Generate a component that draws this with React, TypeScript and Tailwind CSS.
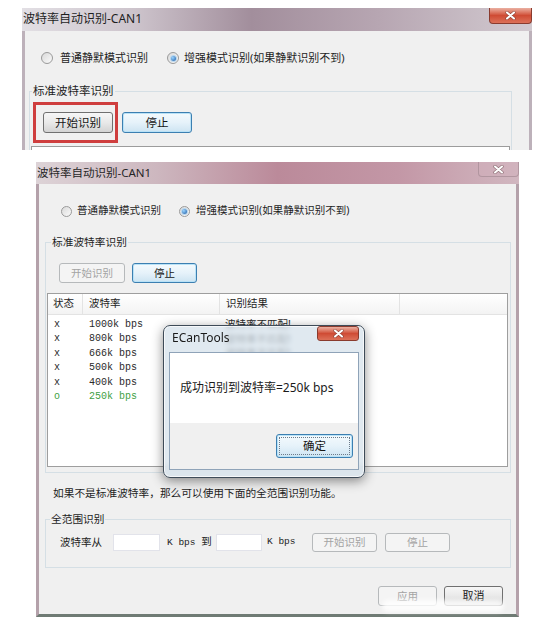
import React from "react";
import { twMerge } from "tailwind-merge";

const ui = "font-['Noto_Sans','Noto_Sans_CJK_SC',sans-serif]";
const mono = "font-['Liberation_Mono','Noto_Sans_CJK_SC',monospace]";

type BtnVariant = "normal" | "focus" | "disabled";

function WinButton({
    children,
    variant = "normal",
    className,
}: {
    children: React.ReactNode;
    variant?: BtnVariant;
    className?: string;
}) {
    const styles: Record<BtnVariant, string> = {
        normal: "border-[#707070] bg-linear-to-b from-[#f7f7f7] via-[#e9e9e9] to-[#d3d3d3] text-[#151515]",
        focus: "border-[#3c7fb1] bg-linear-to-b from-[#f4fafd] via-[#e6f2fa] to-[#cde4f2] text-[#151515] shadow-[inset_0_0_0_1px_#b9e2f7]",
        disabled: "border-[#b6b9bb] bg-[#f4f4f4] text-[#a3a3a3]",
    };
    return (
        <div
            className={twMerge(
                "flex shrink-0 items-center justify-center rounded-[3px] border leading-none",
                styles[variant],
                className,
            )}
        >
            {children}
        </div>
    );
}

function Radio({ checked, className }: { checked?: boolean; className?: string }) {
    return (
        <span
            className={twMerge(
                "flex shrink-0 items-center justify-center rounded-full border border-[#9a9a9a] bg-linear-to-br from-[#d9d9d9] to-[#fbfbfb]",
                className,
            )}
        >
            {checked && (
                <span className="h-[5px] w-[5px] rounded-full bg-[radial-gradient(circle_at_35%_35%,#9ad4ff,#1a5aa5)] shadow-[0_0_0_1px_#b8d6ee]" />
            )}
        </span>
    );
}

function CloseButton({ active, className }: { active?: boolean; className?: string }) {
    return (
        <span
            className={twMerge(
                "flex shrink-0 items-center justify-center rounded-b-[4px] border border-t-0",
                active
                    ? "border-[#8a3b2e] bg-linear-to-b from-[#eab0a2] via-[#cf4b34] to-[#dc7058]"
                    : "border-[#a48b95]/70 bg-[#d3b0bb]/40",
                className,
            )}
        >
            <svg width="11" height="9" viewBox="0 0 11 9">
                <path d="M2 1.5 L9 7.5 M9 1.5 L2 7.5" stroke="#4a2a2a" strokeOpacity="0.45" strokeWidth="3.4" strokeLinecap="round" />
                <path d="M2 1.5 L9 7.5 M9 1.5 L2 7.5" stroke="#ffffff" strokeWidth="2" strokeLinecap="round" />
            </svg>
        </span>
    );
}

function GroupHeader({ label, lead, textClass }: { label: string; lead: string; textClass: string }) {
    return (
        <div className="flex h-[14px] items-end">
            <div className={twMerge("h-[7px] border-l border-t border-[#d5dfe5]", lead)} />
            <span className={twMerge("self-center px-[1px] leading-[14px]", textClass)}>{label}</span>
            <div className="h-[7px] flex-1 border-r border-t border-[#d5dfe5]" />
        </div>
    );
}

// rows 4-5 have their result hidden behind the message box
const rows = [
    { s: "x", rate: "1000k bps", res: "波特率不匹配!" },
    { s: "x", rate: "800k bps", res: "波特率不匹配!" },
    { s: "x", rate: "666k bps", res: "波特率不匹配!" },
    { s: "x", rate: "500k bps", res: "" },
    { s: "x", rate: "400k bps", res: "" },
    { s: "o", rate: "250k bps", res: "", ok: true },
];

function FirstWindow() {
    return (
        <div className="ml-[22px] mt-[8px] flex h-[142px] w-[510px] shrink-0 flex-col overflow-hidden">
            <div className="flex h-[23px] shrink-0 items-start bg-[linear-gradient(90deg,#e2dfe4_0%,#cdc4cc_22%,#a28e9c_45%,#b7a6b2_70%,#d2cad0_100%)]">
                <span className="mt-[3px] pl-[1px] text-[12px] leading-[16px] text-[#1e1e1e]">波特率自动识别-CAN1</span>
                <CloseButton active className="ml-auto h-[16px] w-[43px]" />
            </div>
            <div className="flex-1 border-x-[3px] border-[#bdb1ba] bg-[#f0f0f0]">
                <div className="mt-[20px] flex h-[14px] items-center pl-[16px] text-[11px] text-[#1e1e1e]">
                    <Radio className="h-[12px] w-[12px]" />
                    <span className="ml-[7px]">普通静默模式识别</span>
                    <Radio checked className="ml-[19px] h-[12px] w-[12px]" />
                    <span className="ml-[5px]">增强模式识别(如果静默识别不到)</span>
                </div>
                <div className="ml-[4px] mr-[17px] mt-[19px]">
                    <GroupHeader label="标准波特率识别" lead="w-[3px]" textClass="text-[11.5px] text-[#1e1e1e]" />
                    <div className="border-x border-[#d5dfe5]">
                        <div className="flex pl-[13px] pt-[14px] text-[11.5px]">
                            <WinButton className="h-[21px] w-[70px]">开始识别</WinButton>
                            <WinButton variant="focus" className="ml-[9px] h-[21px] w-[70px]">停止</WinButton>
                        </div>
                        <div className="mx-[1px] mt-[13px] h-[10px] border-x border-t border-[#9c9c9c] bg-white" />
                    </div>
                </div>
            </div>
        </div>
    );
}

function ListBox() {
    return (
        <div className="ml-[1px] mr-[2px] mt-[10px] flex h-[174px] flex-col border border-[#9e9e9e] bg-white">
            <div className="grid h-[21px] shrink-0 grid-cols-[35px_137px_180px_1fr] border-b border-[#e3e3e3] bg-linear-to-b from-white to-[#f3f3f3] text-[10.5px] text-[#1e1e1e]">
                <div className="flex items-center border-r border-[#e3e3e3] pl-[5px]">状态</div>
                <div className="flex items-center border-r border-[#e3e3e3] pl-[6px]">波特率</div>
                <div className="flex items-center border-r border-[#e3e3e3] pl-[6px]">识别结果</div>
                <div />
            </div>
            <div className="pt-[2px]">
                {rows.map((r) => (
                    <div
                        key={r.rate}
                        className={twMerge(
                            "grid h-[14.4px] grid-cols-[35px_137px_180px_1fr] items-center",
                            r.ok ? "text-[#3f9f45]" : "text-[#2a2a2a]",
                        )}
                    >
                        <span className={twMerge("pl-[6px] text-[10px]", mono)}>{r.s}</span>
                        <span className={twMerge("pl-[6px] text-[10px]", mono)}>{r.rate}</span>
                        <span className="pl-[5px] text-[10.5px] leading-none">{r.res}</span>
                        <span />
                    </div>
                ))}
            </div>
        </div>
    );
}

function SecondWindow() {
    return (
        <div className="ml-[36px] mt-[12px] flex h-[455px] w-[483px] shrink-0 flex-col">
            <div className="flex h-[22px] shrink-0 items-start bg-[linear-gradient(90deg,#ddd3d7_0%,#cdb7bf_25%,#bb8a9a_50%,#c397a6_75%,#d1b7c0_100%)]">
                <span className="mt-[3px] pl-[1px] text-[11.5px] leading-[16px] text-[#262626]">波特率自动识别-CAN1</span>
                <CloseButton className="ml-auto h-[15px] w-[41px]" />
            </div>
            <div className="flex flex-1 flex-col border-x-[3px] border-b-[3px] border-x-[#b4a1aa] border-b-[#6f7b74] bg-[#f0f0f0] text-[#1e1e1e]">
                <div className="mt-[20px] flex h-[14px] items-center pl-[22px] text-[10.5px]">
                    <Radio className="h-[11px] w-[11px]" />
                    <span className="ml-[5px]">普通静默模式识别</span>
                    <Radio checked className="ml-[18px] h-[11px] w-[11px]" />
                    <span className="ml-[6px]">增强模式识别(如果静默识别不到)</span>
                </div>

                <div className="ml-[6px] mr-[5px] mt-[17px]">
                    <GroupHeader label="标准波特率识别" lead="w-[6px]" textClass="text-[10.7px]" />
                    <div className="border-x border-b border-[#d5dfe5] pb-[5px]">
                        <div className="flex pl-[13px] pt-[14px] text-[10.5px]">
                            <WinButton variant="disabled" className="h-[20px] w-[66px]">开始识别</WinButton>
                            <WinButton variant="focus" className="ml-[7px] h-[20px] w-[65px]">停止</WinButton>
                        </div>
                        <ListBox />
                    </div>
                </div>

                <div className="mt-[13px] h-[14px] pl-[14px] text-[10.7px] leading-[14px]">
                    如果不是标准波特率，那么可以使用下面的全范围识别功能。
                </div>

                <div className="ml-[6px] mr-[5px] mt-[12px]">
                    <GroupHeader label="全范围识别" lead="w-[5px]" textClass="text-[10.7px]" />
                    <div className="border-x border-b border-[#d5dfe5] pb-[15px] pt-[7px]">
                        <div className="flex h-[19px] items-center whitespace-nowrap pl-[14px] text-[10.5px]">
                            <span className="w-[42px] shrink-0">波特率从</span>
                            <div className="ml-[11px] h-[17px] w-[47px] shrink-0 border border-[#e2e3ea] bg-white" />
                            <span className={twMerge("ml-[7px] w-[44px] shrink-0 text-[9.5px]", mono)}>
                                K bps <span className={ui + " text-[10.5px]"}>到</span>
                            </span>
                            <div className="ml-[5px] h-[17px] w-[46px] shrink-0 border border-[#e2e3ea] bg-white" />
                            <span className={twMerge("ml-[5px] w-[28px] shrink-0 text-[9.5px]", mono)}>K bps</span>
                            <WinButton variant="disabled" className="ml-[17px] h-[19px] w-[65px]">开始识别</WinButton>
                            <WinButton variant="disabled" className="ml-[8px] h-[19px] w-[65px]">停止</WinButton>
                        </div>
                    </div>
                </div>

                <div className="mt-[18px] flex justify-end pr-[13px] text-[10.5px]">
                    <WinButton variant="disabled" className="h-[20px] w-[59px]">应用</WinButton>
                    <WinButton className="ml-[7px] h-[20px] w-[59px] text-[11px]">取消</WinButton>
                </div>
            </div>
        </div>
    );
}

function MessageDialog() {
    return (
        <div className="absolute left-[163px] top-[325px] flex h-[153px] w-[202px] flex-col rounded-[7px] border border-[#3e4b58] bg-[#d6e1eb]/75 px-[5px] pb-[7px] shadow-[0_3px_12px_rgba(0,0,0,0.45),inset_0_0_0_1px_rgba(255,255,255,0.7)] backdrop-blur-[2px]">
            <div className="flex h-[26px] shrink-0 items-start">
                <span className="mt-[4px] pl-[3px] text-[12px] leading-[16px] text-[#1a1a1a]">ECanTools</span>
                <CloseButton active className="ml-auto h-[15px] w-[42px] rounded-[3px] border-t" />
            </div>
            <div className="flex flex-1 flex-col border border-[#8fa3b8]">
                <div className="flex h-[70px] shrink-0 items-center bg-white pl-[10px] text-[12px] text-[#1a1a1a]">
                    成功识别到波特率=250k bps
                </div>
                <div className="flex flex-1 justify-end bg-[#f0f0f0] pr-[5px] pt-[11px]">
                    <WinButton variant="focus" className="h-[24px] w-[77px] text-[11.5px]">
                        <span className="flex h-[18px] w-[71px] items-center justify-center border border-dotted border-[#6b7b8b]">
                            确定
                        </span>
                    </WinButton>
                </div>
            </div>
        </div>
    );
}

export default function App() {
    return (
        <div className={twMerge("relative flex h-[620px] w-[535px] flex-col overflow-hidden bg-white", ui)}>
            <FirstWindow />
            <SecondWindow />
            {/* highlight drawn over the first window's start button */}
            <div className="absolute left-[33px] top-[102px] h-[41px] w-[85px] border-[3px] border-[#cf3e3e]" />
            <MessageDialog />
            <div className="absolute left-[382px] top-[600px] h-[12px] w-[122px] rounded-full bg-white/80 blur-[2px]" />
        </div>
    );
}
